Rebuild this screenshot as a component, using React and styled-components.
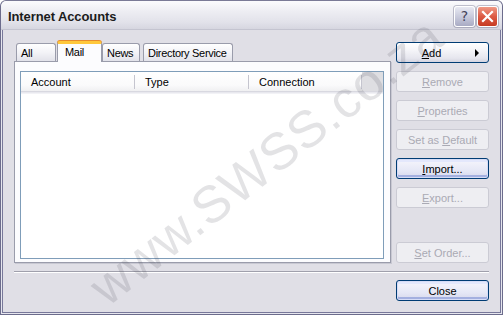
import React from "react";
import styled, { createGlobalStyle, css } from "styled-components";

const GlobalStyle = createGlobalStyle`
  html, body {
    margin: 0;
    padding: 0;
    background: #ffffff;
  }
  body {
    font-family: "Liberation Sans", Arial, sans-serif;
    font-size: 11px;
    color: #000;
  }
`;

const tabs = [
  { label: "All", w: 40, ml: 0 },
  { label: "Mail", w: 45, ml: 1, active: true },
  { label: "News", w: 38, ml: 0 },
  { label: "Directory Service", w: 90, ml: 3 },
];

const columns = [
  { label: "Account", w: 114 },
  { label: "Type", w: 114 },
  { label: "Connection", w: 113 },
];

const sideButtons = [
  { pre: "", key: "A", post: "dd", enabled: true, arrow: true },
  { pre: "", key: "R", post: "emove" },
  { pre: "", key: "P", post: "roperties" },
  { pre: "Set as ", key: "D", post: "efault" },
  { pre: "", key: "I", post: "mport...", enabled: true, focus: true },
  { pre: "", key: "E", post: "xport..." },
  { pre: "", key: "S", post: "et Order...", gapTop: 34 },
];

const App = () => {
  return (
    <>
      <GlobalStyle />
      <Window>
        <TitleBar>
          <Title>Internet Accounts</Title>
          <Caption>
            <HelpBtn>?</HelpBtn>
            <CloseBtn>
              <svg width="13" height="13" viewBox="0 0 13 13">
                <path
                  d="M2 2 L11 11 M11 2 L2 11"
                  stroke="#fff"
                  strokeWidth="2.2"
                  strokeLinecap="square"
                />
              </svg>
            </CloseBtn>
          </Caption>
        </TitleBar>
        <Content>
          <LeftColumn>
            <TabRow>
              {tabs.map((t) => (
                <Tab key={t.label} $w={t.w} $ml={t.ml} $active={t.active}>
                  {t.label}
                </Tab>
              ))}
            </TabRow>
            <Panel>
              <ListView>
                <Header>
                  {columns.map((c) => (
                    <HeaderCell key={c.label} $w={c.w}>
                      {c.label}
                    </HeaderCell>
                  ))}
                  <HeaderFiller />
                </Header>
              </ListView>
            </Panel>
          </LeftColumn>
          <RightColumn>
            {sideButtons.map((b) => (
              <Button
                key={b.pre + b.key + b.post}
                $enabled={b.enabled}
                $focus={b.focus}
                $arrow={b.arrow}
                $gapTop={b.gapTop}
              >
                <span>
                  {b.pre}
                  <u>{b.key}</u>
                  {b.post}
                </span>
                {b.arrow && <Arrow />}
              </Button>
            ))}
          </RightColumn>
        </Content>
        <Separator />
        <Footer>
          <Button $enabled $focus>
            Close
          </Button>
        </Footer>
        <Watermark>www.SWSS.co.za</Watermark>
      </Window>
    </>
  );
};

export default App;

const Window = styled.div`
  position: relative;
  width: 503px;
  height: 315px;
  box-sizing: border-box;
  border: 1px solid #6c6c8c;
  border-top-color: #7a7a96;
  border-radius: 6px 6px 0 0;
  background: #e0dfe6;
  box-shadow: inset 0 0 0 1px #e6e6ee, inset 0 0 0 2px #78789a;
  overflow: hidden;
`;

const TitleBar = styled.div`
  height: 28px;
  display: flex;
  align-items: center;
  justify-content: space-between;
  padding: 0 4px 0 7px;
  background: linear-gradient(#fbfbfd 0%, #eeeef3 35%, #e2e2ea 75%, #d6d6e0 100%);
  border-bottom: 1px solid #c4c4d0;
  border-radius: 5px 5px 0 0;
`;

const Title = styled.div`
  font-family: "Liberation Sans", Arial, sans-serif;
  font-weight: bold;
  font-size: 13px;
  color: #1c1c1c;
  padding-top: 2px;
  letter-spacing: -0.1px;
`;

const Caption = styled.div`
  display: flex;
  gap: 2px;
  padding-top: 2px;
`;

const captionBtn = css`
  width: 21px;
  height: 21px;
  box-sizing: border-box;
  border: 1px solid #ffffff;
  border-radius: 3px;
  display: flex;
  align-items: center;
  justify-content: center;
  box-shadow: 0 0 0 1px rgba(90, 90, 120, 0.35);
`;

const HelpBtn = styled.div`
  ${captionBtn};
  background: linear-gradient(#e8e9f2, #c6c8da 55%, #a9abc4);
  color: #44445a;
  font-family: "DejaVu Sans", sans-serif;
  font-size: 14px;
`;

const CloseBtn = styled.div`
  ${captionBtn};
  background: linear-gradient(#f09a86, #dc5a44 50%, #c63a22);
`;

const Content = styled.div`
  display: flex;
  align-items: flex-start;
  gap: 5px;
  padding: 11px 13px 0 13px;
`;

const LeftColumn = styled.div`
  width: 377px;
  display: flex;
  flex-direction: column;
`;

const TabRow = styled.div`
  height: 20px;
  display: flex;
  align-items: flex-end;
  padding-left: 2px;
  position: relative;
  z-index: 1;
`;

const Tab = styled.div`
  width: ${(p) => p.$w}px;
  margin-left: ${(p) => p.$ml}px;
  box-sizing: border-box;
  height: ${(p) => (p.$active ? 21 : 18)}px;
  margin-bottom: ${(p) => (p.$active ? -1 : 0)}px;
  border: 1px solid #9a9cab;
  border-bottom: none;
  border-radius: 3px 3px 0 0;
  padding-left: ${(p) => (p.$active ? 7 : 4)}px;
  display: flex;
  align-items: center;
  white-space: nowrap;
  letter-spacing: -0.3px;
  background: ${(p) =>
    p.$active
      ? "#fcfcfe"
      : "linear-gradient(#ffffff, #f3f3f7 50%, #e2e2ea)"};
  ${(p) =>
    p.$active &&
    css`
      border-top: 3px solid #ffc83c;
      box-shadow: 0 -1px 0 #e68b2c;
      padding-bottom: 3px;
    `}
`;

const Panel = styled.div`
  height: 202px;
  box-sizing: border-box;
  border: 1px solid #9a9cab;
  background: #fcfcfe;
  box-shadow: 1px 1px 0 #c8c8d2;
  padding: 9px 0 0 5px;
`;

const ListView = styled.div`
  width: 364px;
  height: 188px;
  box-sizing: border-box;
  border: 1px solid #7f9db9;
  background: #ffffff;
`;

const Header = styled.div`
  height: 19px;
  display: flex;
  background: linear-gradient(#ffffff, #fafafb 70%, #f0f0f2);
  border-bottom: 1px solid #d8d8e0;
  box-shadow: 0 1px 0 #e8e8ee, 0 2px 0 #f2f2f6;
`;

const HeaderCell = styled.div`
  width: ${(p) => p.$w}px;
  box-sizing: border-box;
  padding-left: 10px;
  display: flex;
  align-items: center;
  position: relative;

  &::after {
    content: "";
    position: absolute;
    right: 0;
    top: 3px;
    bottom: 2px;
    width: 1px;
    background: #c5c5cf;
  }
`;

const HeaderFiller = styled.div`
  flex: 1;
  background: #dedee2;
`;

const RightColumn = styled.div`
  width: 93px;
  display: flex;
  flex-direction: column;
  gap: 8px;
  padding-top: 1px;
`;

const Button = styled.div`
  width: 93px;
  height: 21px;
  box-sizing: border-box;
  border-radius: 3px;
  display: flex;
  align-items: center;
  justify-content: center;
  position: relative;
  white-space: nowrap;
  margin-top: ${(p) => (p.$gapTop ? p.$gapTop - 8 : 0)}px;
  padding-right: ${(p) => (p.$arrow ? 22 : 0)}px;
  ${(p) =>
    p.$enabled
      ? css`
          border: 1px solid #003c74;
          background: linear-gradient(#ffffff, #f4f4f8 40%, #e6e6ee 80%, #d4d4e0);
          color: #000;
        `
      : css`
          border: 1px solid #cbcbd4;
          background: #eeeef2;
          color: #aaaab4;
        `}
  ${(p) =>
    p.$focus &&
    css`
      box-shadow: inset 0 0 0 1px #d6dcf6, inset 0 -2px 0 1px #a4b0e0,
        inset 0 2px 0 1px #e4e8fc;
      background: linear-gradient(#f6f6fc, #e6e8f6 60%, #d6d8ec);
    `}

  u {
    text-decoration-thickness: 1px;
    text-underline-offset: 1px;
  }
`;

const Arrow = styled.div`
  position: absolute;
  right: 9px;
  top: 6px;
  width: 0;
  height: 0;
  border-top: 4px solid transparent;
  border-bottom: 4px solid transparent;
  border-left: 4px solid #000;
`;

const Separator = styled.div`
  margin: 8px 13px 0 13px;
  height: 1px;
  background: #a0a0ac;
  border-bottom: 1px solid #ffffff;
`;

const Footer = styled.div`
  display: flex;
  justify-content: flex-end;
  padding: 7px 13px 0 13px;
`;

const Watermark = styled.div`
  position: absolute;
  left: 265px;
  top: 160px;
  transform: translate(-50%, -50%) rotate(-38deg);
  font-family: "Liberation Sans", Arial, sans-serif;
  font-size: 52px;
  color: rgba(60, 60, 70, 0.14);
  white-space: nowrap;
  pointer-events: none;
  letter-spacing: 1px;
`;
